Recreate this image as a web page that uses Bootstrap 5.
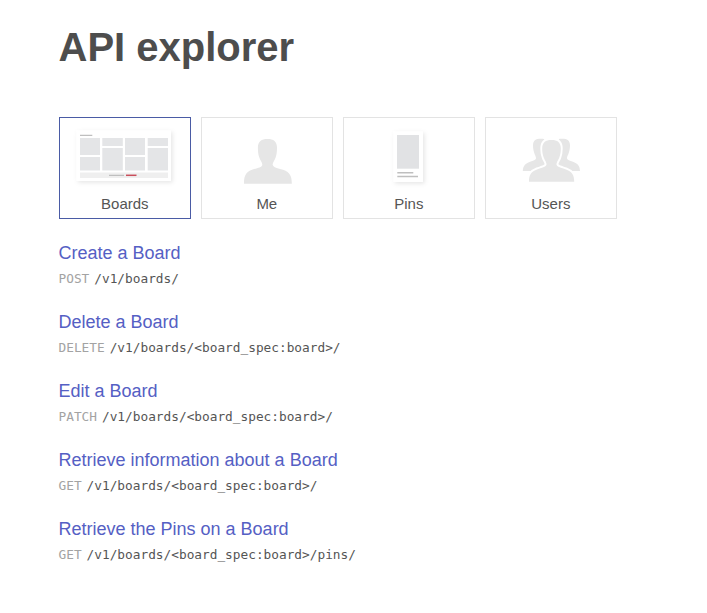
<!DOCTYPE html>
<html lang="en">
<head>
<meta charset="utf-8">
<meta name="viewport" content="width=device-width, initial-scale=1">
<title>API explorer</title>
<link href="https://cdn.jsdelivr.net/npm/bootstrap@5.3.0/dist/css/bootstrap.min.css" rel="stylesheet">
<style>
body { font-family: "Liberation Sans", Arial, sans-serif; color: #4d4d4d; background: #fff; }
.explorer { padding: 24px 0 0 58.5px; }
.page-title { font-size: 40px; line-height: 46px; color: #4d4d4d; margin-bottom: 47px; }
.tabs-row { gap: 10px; margin: 0 0 23px .5px; }
.tile { width: 132px; height: 102px; border: 1px solid #e3e3e3; color: #555; font-size: 15px; line-height: 18px; }
.tile.active { border-color: #4a5ba5; }
.tile svg { width: 130px; height: 77px; }
.tile span { margin-left: -.4px; }
.endpoint { height: 69px; }
.endpoint a { font-size: 18px; line-height: 22px; color: #5560c4; }
.route { font: 12.79px/18px "DejaVu Sans Mono", "Liberation Mono", monospace; margin-top: 6px; color: #555; gap: 5px; }
.verb { color: #a3a3a3; }
</style>
</head>
<body>
<main class="explorer">
  <h1 class="page-title fw-bold">API explorer</h1>
  <nav class="tabs-row d-flex">
    <a href="#" class="tile active d-flex flex-column align-items-center text-decoration-none">
      <svg viewBox="60 118 130 77">
        <defs><filter id="soft" x="-20%" y="-20%" width="140%" height="150%"><feDropShadow dx="1.5" dy="1.5" stdDeviation="2" flood-color="#000" flood-opacity=".1"/></filter></defs>
        <rect x="76.500" y="130.500" width="94.500" height="50.500" fill="#fff" filter="url(#soft)"/>
        <path fill="#e4e5e7" d="M80 138h20v17H80zM80 157h20v13.500H80zM102.300 138h20.500v8h-20.500zM102.300 148h20.500v22.500h-20.500zM125 138h20v17H125zM125 157h20v13.500H125zM147.700 138H168v8h-20.300zM147.700 148H168v22.500h-20.300z"/>
        <path fill="#efefef" d="M80 172.500h88v5.500H80z"/>
        <path stroke="#bfbfbf" stroke-width="1.300" d="M80 135.300h12.300M109 175.300h15"/>
        <path stroke="#c94f5c" stroke-width="1.500" d="M126 175.300h10.500"/>
      </svg>
      <span>Boards</span>
    </a>
    <a href="#" class="tile d-flex flex-column align-items-center text-decoration-none">
      <svg viewBox="202 118 130 77">
        <path fill="#e6e6e6" d="M244 183.700C244 177 245 172.500 252 169.800C257.500 168 261.500 167.500 262.300 165C262.500 162.500 260.500 161 259.300 157.500C258.200 154.500 257.900 151.500 257.900 147.500C257.900 141.500 261.500 139 267.500 139C273.500 139 277 141.500 277 147.500C277 151.500 276.700 154.500 275.600 157.500C274.400 161 272.400 162.500 272.700 165C273.500 167.500 277.500 168 283 169.800C290.500 172.500 291.800 177 291.800 183.700Z"/>
      </svg>
      <span>Me</span>
    </a>
    <a href="#" class="tile d-flex flex-column align-items-center text-decoration-none">
      <svg viewBox="344 118 130 77">
        <rect x="393.500" y="131.500" width="29.500" height="50.500" fill="#fff" filter="url(#soft)"/>
        <path fill="#e1e2e4" d="M397 135h22v33.700h-22z"/>
        <path stroke="#bfbfbf" stroke-width="1.400" d="M397.300 172.800h16M397.300 176.500h20.700"/>
      </svg>
      <span>Pins</span>
    </a>
    <a href="#" class="tile d-flex flex-column align-items-center text-decoration-none">
      <svg viewBox="486 118 130 77">
        <path fill="#e6e6e6" d="M522.800 171C523 165.500 525.500 163.500 530 161.700C533.500 160.500 535.500 160 536 158.500C536.300 156.500 533 152.500 533 145.500C533 140.500 535.500 138.700 541 138.700C542.500 138.700 543.500 138.800 544.300 139.100L543 143H560L558.800 139.100C559.600 138.800 560.600 138.700 562 138.700C567.500 138.700 570 140.500 570 145.500C570 152.500 566.700 156.500 567 158.500C567.500 160 569.500 160.500 573 161.700C577.500 163.500 579.800 165.500 580 171Z"/>
        <path fill="#e6e6e6" stroke="#fff" stroke-width="3.800" paint-order="stroke" d="M529 181.700C529 175.500 530.500 171.700 537 169.400C542 167.700 545.700 167 546.500 164.700C546.800 162.500 545 161 543.700 157.500C542.600 154.500 542.200 152 542.200 148.500C542.200 142.500 545.500 140 551.500 140C557.500 140 560.800 142.500 560.800 148.500C560.800 152 560.400 154.500 559.300 157.500C558 161 556.200 162.500 556.500 164.700C557.300 167 561 167.700 566 169.400C572.500 171.700 574.200 175.500 574.200 181.700Z"/>
      </svg>
      <span>Users</span>
    </a>
  </nav>
  <section>
    <div class="endpoint"><a href="#" class="d-block text-decoration-none">Create a Board</a><div class="route d-flex"><span class="verb">POST</span><span>/v1/boards/</span></div></div>
    <div class="endpoint"><a href="#" class="d-block text-decoration-none">Delete a Board</a><div class="route d-flex"><span class="verb">DELETE</span><span>/v1/boards/&lt;board_spec:board&gt;/</span></div></div>
    <div class="endpoint"><a href="#" class="d-block text-decoration-none">Edit a Board</a><div class="route d-flex"><span class="verb">PATCH</span><span>/v1/boards/&lt;board_spec:board&gt;/</span></div></div>
    <div class="endpoint"><a href="#" class="d-block text-decoration-none">Retrieve information about a Board</a><div class="route d-flex"><span class="verb">GET</span><span>/v1/boards/&lt;board_spec:board&gt;/</span></div></div>
    <div class="endpoint"><a href="#" class="d-block text-decoration-none">Retrieve the Pins on a Board</a><div class="route d-flex"><span class="verb">GET</span><span>/v1/boards/&lt;board_spec:board&gt;/pins/</span></div></div>
  </section>
</main>
<script src="https://cdn.jsdelivr.net/npm/bootstrap@5.3.0/dist/js/bootstrap.bundle.min.js"></script>
</body>
</html>
